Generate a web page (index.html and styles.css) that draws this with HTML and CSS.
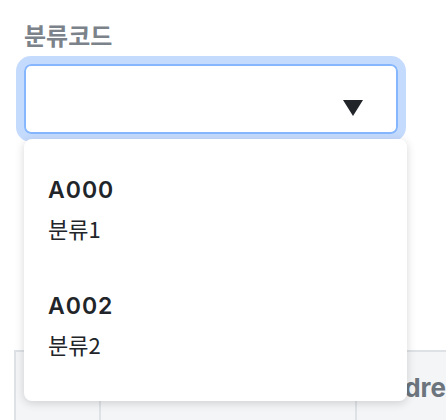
FILE: index.html
```html
<!DOCTYPE html>
<html lang="ko">
<head>
<meta charset="utf-8">
<link rel="stylesheet" href="styles.css">
</head>
<body>
<div class="page">
  <div class="field">
    <label class="label">분류코드</label>
    <div class="select-wrap">
      <div class="select">
        <svg class="caret" width="20" height="16" viewBox="0 0 20 16"><polygon points="0,0 20,0 10,16" fill="#212529"/></svg>
      </div>
      <ul class="menu">
        <li class="item"><div class="code">A000</div><div class="name">분류1</div></li>
        <li class="item"><div class="code">A002</div><div class="name">분류2</div></li>
      </ul>
    </div>
  </div>
  <table class="grid">
    <thead>
      <tr><th class="c1"></th><th class="c2"></th><th class="c3">Address</th></tr>
    </thead>
  </table>
</div>
</body>
</html>
```
FILE: styles.css
```css
html, body {
  margin: 0;
  padding: 0;
  background: #fff;
  overflow: hidden;
}
.page {
  width: 446px;
  height: 420px;
  overflow: hidden;
  font-family: Inter, "Noto Sans CJK KR", sans-serif;
  padding-top: 19px;
  box-sizing: border-box;
}
.field {
  padding: 0 48px 0 24px;
}
.label {
  display: block;
  font-family: "Noto Sans CJK KR", sans-serif;
  font-size: 24px;
  line-height: 31px;
  font-weight: 700;
  color: #7b8289;
  margin-bottom: 14px;
}
.select-wrap {
  position: relative;
  width: 374px;
}
.select {
  height: 70px;
  box-sizing: border-box;
  border: 2px solid #86b7fe;
  border-radius: 7px;
  box-shadow: 0 0 0 8px #c5dbfe;
  display: flex;
  align-items: flex-end;
  justify-content: flex-end;
  padding: 0 33px 16px 0;
}
.caret {
  display: block;
}
.menu {
  position: absolute;
  top: calc(100% + 5px);
  left: 0;
  width: 383px;
  height: 262px;
  box-sizing: border-box;
  margin: 0;
  padding: 11px 0 0;
  list-style: none;
  background: #fff;
  border-radius: 8px;
  box-shadow: 0 2px 10px rgba(0, 0, 0, 0.16);
  z-index: 2;
}
.item {
  padding: 24px;
}
.code {
  font-size: 23px;
  line-height: 32px;
  font-weight: 600;
  letter-spacing: 1px;
  color: #212529;
}
.name {
  margin-top: 8px;
  font-family: "Noto Sans CJK KR", sans-serif;
  font-size: 22px;
  line-height: 28px;
  color: #212529;
}
.grid {
  margin: 216px 0 0 14px;
  border-collapse: collapse;
  width: 520px;
  table-layout: fixed;
}
.grid th {
  height: 70px;
  padding: 0;
  background: #f4f5f7;
  border: 2px solid #dee2e6;
  border-bottom: none;
  text-align: left;
  font-size: 26px;
  font-weight: 700;
  color: #6c757d;
  white-space: nowrap;
  overflow: hidden;
}
.grid .c1 { width: 83px; }
.grid .c2 { width: 254px; }
.grid .c3 { width: 183px; padding-left: 12px; }
```
